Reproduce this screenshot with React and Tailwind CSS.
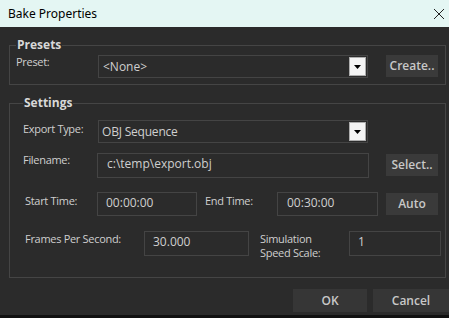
import React from "react";

const font = { fontFamily: "'Open Sans', 'Noto Sans', sans-serif" };

function Arrow() {
  return (
    <div className="w-[17px] h-[19px] bg-[#f4f4f4] border border-[#adadad] flex items-center justify-center">
      <svg width="7" height="4" viewBox="0 0 7 4">
        <path d="M0 0 H7 L3.5 4 Z" fill="#000" />
      </svg>
    </div>
  );
}

function Btn({ children, className = "" }) {
  return (
    <div
      className={
        "bg-[#3a3a3a] text-[#c8c8c8] font-semibold text-[12px] flex items-center justify-center " +
        className
      }
    >
      {children}
    </div>
  );
}

function Field({ children, className = "" }) {
  return (
    <div
      className={
        "border border-[#444444] text-[#cfcfcf] text-[12px] leading-none flex items-start " +
        className
      }
    >
      {children}
    </div>
  );
}

const lbl = "text-[11px] tracking-[-0.3px] text-[#cfcfcf] leading-[14px]";

export default function App() {
  return (
    <div
      className="w-[449px] h-[318px] bg-[#2b2b2b] flex flex-col overflow-hidden"
      style={font}
    >
      <div className="h-[27px] bg-[#e4f6f3] flex items-center justify-between pl-[8px] pr-[4px] shrink-0">
        <span className="text-[12px] text-black" style={{ fontFamily: "'Noto Sans', sans-serif" }}>
          Bake Properties
        </span>
        <svg width="12" height="12" viewBox="0 0 12 12">
          <path d="M1 1 L11 11 M11 1 L1 11" stroke="#222" strokeWidth="1" />
        </svg>
      </div>

      <div className="flex-1 flex flex-col pl-[9px] pr-[3px]">
        {/* Presets */}
        <fieldset className="mt-[10px] border border-[#454545] h-[48px] px-[6px]">
          <legend className="px-[1px] text-[12px] font-bold text-[#d8d8d8] leading-[16px]">
            Presets
          </legend>
          <div className="flex items-start">
            <span className={lbl + " w-[82px] mt-[2px]"}>Preset:</span>
            <div className="w-[270px] h-[23px] border border-[#444444] flex items-center justify-between pl-[4px] pr-[1px] mt-[2px]">
              <span className="text-[12px] text-[#cfcfcf]">&lt;None&gt;</span>
              <Arrow />
            </div>
            <Btn className="ml-[18px] w-[52px] h-[22px] mt-[2px]">Create..</Btn>
          </div>
        </fieldset>

        {/* Settings */}
        <fieldset className="mt-[10px] border border-[#454545] h-[183px] pl-[13px]">
          <legend className="px-[1px] text-[12px] font-bold text-[#d8d8d8] leading-[16px]">
            Settings
          </legend>
          <div className="flex items-start mt-[9px]">
            <span className={lbl + " w-[75px] mt-[2px]"}>Export Type:</span>
            <div className="w-[270px] h-[23px] border border-[#444444] flex items-center justify-between pl-[3px] pr-[1px]">
              <span className="text-[12px] text-[#cfcfcf] tracking-[-0.2px]">OBJ Sequence</span>
              <Arrow />
            </div>
          </div>

          <div className="flex items-start mt-[10px]">
            <span className={lbl + " w-[74px]"}>Filename:</span>
            <Field className="w-[272px] h-[25px] pl-[9px] pt-[4px]">c:\temp\export.obj</Field>
            <Btn className="ml-[17px] w-[52px] h-[22px] mt-[1px]">Select..</Btn>
          </div>

          <div className="flex items-start mt-[14px]">
            <span className={lbl + " w-[72px] ml-[2px] mt-[2px]"}>Start Time:</span>
            <Field className="w-[100px] h-[24px] pl-[8px] pt-[4px]">00:00:00</Field>
            <span className={lbl + " w-[72px] ml-[8px] mt-[2px]"}>End Time:</span>
            <Field className="w-[101px] h-[24px] pl-[9px] pt-[4px]">00:30:00</Field>
            <Btn className="ml-[8px] w-[52px] h-[22px] mt-[1px]">Auto</Btn>
          </div>

          <div className="flex items-start mt-[15px]">
            <span className={lbl + " w-[119px] ml-[2px] mt-[1px]"}>Frames Per Second:</span>
            <Field className="w-[105px] h-[25px] pl-[8px] pt-[4px]">30.000</Field>
            <span className={lbl + " w-[89px] ml-[11px] -mt-[0px] flex flex-col"}>
              <span className="leading-[15px]">Simulation</span>
              <span className="leading-[15px] -mt-[1px]">Speed Scale:</span>
            </span>
            <Field className="w-[92px] h-[25px] pl-[8px] pt-[4px]">1</Field>
          </div>
        </fieldset>

        <div className="flex justify-end mt-[11px]">
          <Btn className="w-[74px] h-[23px] bg-[#363636]">OK</Btn>
          <Btn className="ml-[6px] w-[76px] h-[23px] bg-[#363636] -mr-[3px]">Cancel</Btn>
        </div>
      </div>
      <div className="h-[3px] bg-[#111111] shrink-0" />
    </div>
  );
}
